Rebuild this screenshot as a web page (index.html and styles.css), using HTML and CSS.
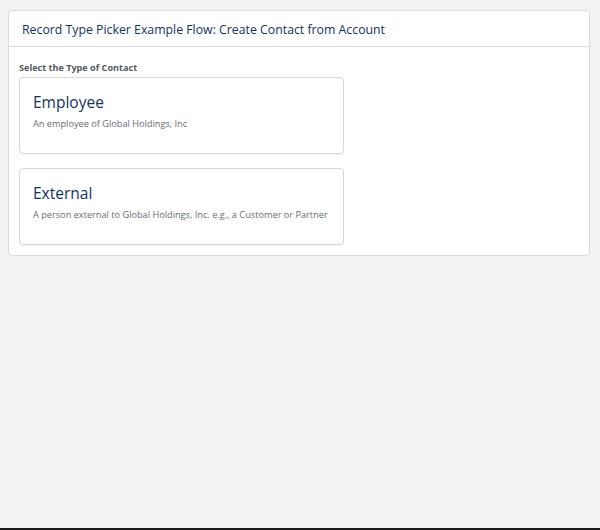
FILE: index.html
```html
<!DOCTYPE html>
<html>
<head>
<meta charset="utf-8">
<link rel="stylesheet" href="styles.css">
</head>
<body>
<div class="page">
  <div class="card">
    <div class="card-header">Record Type Picker Example Flow: Create Contact from Account</div>
    <div class="card-body">
      <div class="label">Select the Type of Contact</div>
      <div class="tiles">
        <div class="tile">
          <div class="tile-title">Employee</div>
          <div class="tile-desc">An employee of Global Holdings, Inc</div>
        </div>
        <div class="tile">
          <div class="tile-title">External</div>
          <div class="tile-desc">A person external to Global Holdings, Inc. e.g., a Customer or Partner</div>
        </div>
      </div>
    </div>
  </div>
</div>
<div class="bottom-bar"></div>
</body>
</html>
```

FILE: styles.css
```css
html, body {
  margin: 0;
  padding: 0;
  height: 530px;
}
body {
  background: #f3f2f3;
  font-family: "Open Sans", "Noto Sans", sans-serif;
  display: flex;
  flex-direction: column;
}
.page {
  flex: 1;
  padding: 10px 10px 0 8px;
}
.card {
  background: #fff;
  border: 1px solid #dddbda;
  border-radius: 4px;
}
.card-header {
  height: 36px;
  box-sizing: border-box;
  padding: 11px 0 0 13px;
  font-size: 12.3px;
  line-height: 16px;
  color: #16325c;
  border-bottom: 1px solid #dddbda;
}
.card-body {
  padding: 15px 10px 10px 10px;
}
.label {
  font-size: 9.1px;
  font-weight: 700;
  color: #54595f;
  line-height: 12px;
  margin-bottom: 3px;
}
.tiles {
  display: flex;
  flex-direction: column;
  gap: 14px;
}
.tile {
  width: 325px;
  height: 77px;
  box-sizing: border-box;
  border: 1px solid #d8d7d6;
  border-radius: 4px;
  padding: 13px 6px 0 13px;
  box-shadow: 0 1px 1px rgba(0,0,0,0.05);
}
.tile-title {
  font-size: 15.5px;
  line-height: 22px;
  color: #16325c;
}
.tile-desc {
  font-size: 9.2px;
  line-height: 14px;
  color: #6b6d70;
  margin-top: 4px;
  white-space: nowrap;
}
.bottom-bar {
  height: 2px;
  background: #1b1b1b;
}
```
